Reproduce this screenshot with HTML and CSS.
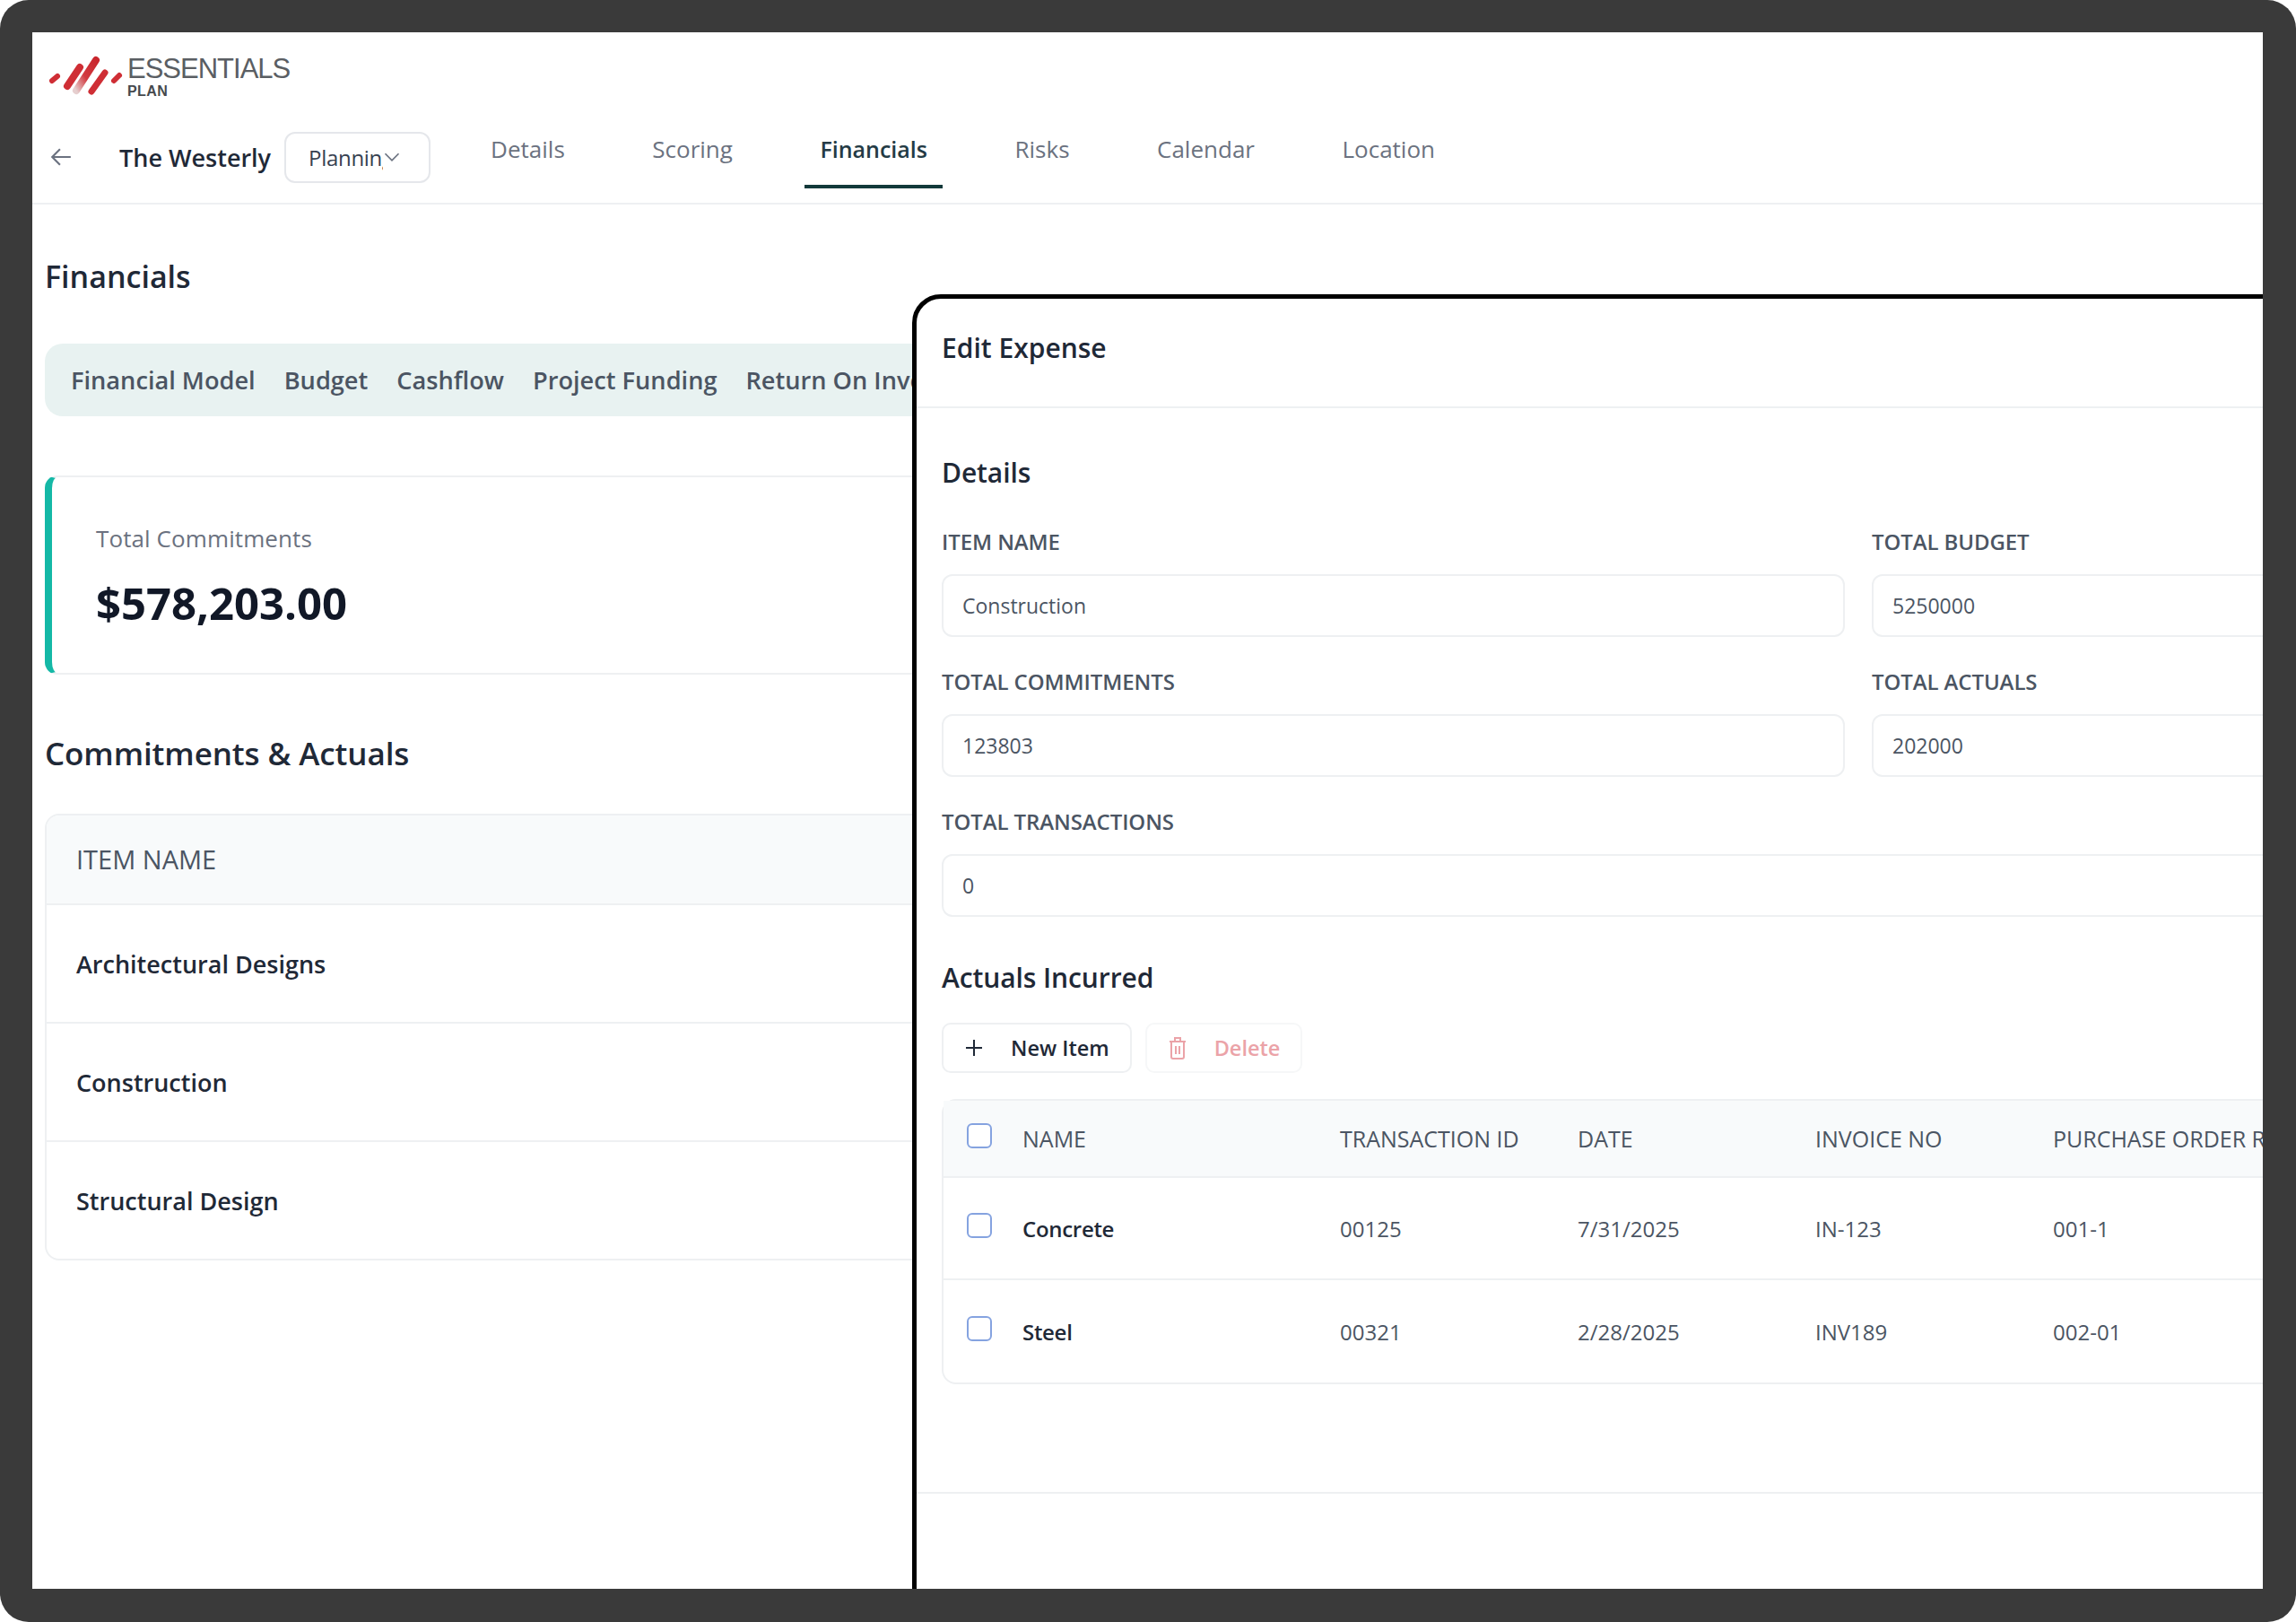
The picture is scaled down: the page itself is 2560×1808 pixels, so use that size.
FILE: index.html
```html
<!DOCTYPE html>
<html lang="en">
<head>
    <meta charset="UTF-8">
    <title>Financials</title>
    <link rel="stylesheet" href="styles.css">
</head>
<body>
    <div class="frame">
        <div class="screen">
            <header class="topbar">
                <div class="brand">
                    <svg class="brand-mark" viewBox="0 0 84 50" width="84" height="50">
                        <defs>
                            <linearGradient id="markfade" x1="0" y1="1" x2="1" y2="0">
                                <stop offset="0" stop-color="#e6cfcf"/>
                                <stop offset="0.45" stop-color="#d23a40"/>
                                <stop offset="1" stop-color="#c9262d"/>
                            </linearGradient>
                        </defs>
                        <g fill="none" stroke="#cf2e35" stroke-linecap="round">
                            <path d="M3 30 L9 25" stroke-width="6"/>
                            <path d="M20 36 L34 15" stroke-width="8"/>
                            <path d="M30 41 L52 7" stroke="url(#markfade)" stroke-width="8"/>
                            <path d="M47 42 L62 21" stroke-width="7"/>
                            <path d="M72 30 L78 24" stroke-width="6"/>
                        </g>
                    </svg>
                    <div class="brand-text">
                        <span class="brand-name">ESSENTIALS</span>
                        <span class="brand-sub">PLAN</span>
                    </div>
                </div>
                <div class="nav-row">
                    <svg class="back-icon" viewBox="0 0 24 24" width="26" height="26">
                        <path d="M22 12H3M11 4l-8 8 8 8" fill="none" stroke="#6b7280" stroke-width="2"/>
                    </svg>
                    <span class="project-name">The Westerly</span>
                    <div class="status-select">
                        <span class="status-value">Planning</span>
                        <svg viewBox="0 0 16 16" width="20" height="20">
                            <path d="M2 5l6 6 6-6" fill="none" stroke="#6b7280" stroke-width="1.4"/>
                        </svg>
                    </div>
                    <nav class="tabs">
                        <a class="tab">Details</a>
                        <a class="tab">Scoring</a>
                        <a class="tab active">Financials</a>
                        <a class="tab">Risks</a>
                        <a class="tab">Calendar</a>
                        <a class="tab">Location</a>
                    </nav>
                </div>
            </header>

            <main class="content">
                <h1 class="page-title">Financials</h1>
                <div class="subtabs">
                    <span>Financial Model</span>
                    <span>Budget</span>
                    <span>Cashflow</span>
                    <span>Project Funding</span>
                    <span>Return On Investment</span>
                </div>
                <section class="stat-card">
                    <div class="stat-label">Total Commitments</div>
                    <div class="stat-value">$578,203.00</div>
                </section>
                <h2 class="section-title">Commitments &amp; Actuals</h2>
                <div class="items-table">
                    <div class="items-head">ITEM NAME</div>
                    <div class="items-row">Architectural Designs</div>
                    <div class="items-row">Construction</div>
                    <div class="items-row">Structural Design</div>
                </div>
            </main>

            <aside class="drawer">
                <div class="drawer-head">Edit Expense</div>
                <div class="drawer-body">
                    <h3 class="drawer-title">Details</h3>
                    <div class="form-grid">
                        <div class="field">
                            <label>ITEM NAME</label>
                            <div class="input">Construction</div>
                        </div>
                        <div class="field">
                            <label>TOTAL BUDGET</label>
                            <div class="input">5250000</div>
                        </div>
                        <div class="field">
                            <label>TOTAL COMMITMENTS</label>
                            <div class="input">123803</div>
                        </div>
                        <div class="field">
                            <label>TOTAL ACTUALS</label>
                            <div class="input">202000</div>
                        </div>
                        <div class="field wide">
                            <label>TOTAL TRANSACTIONS</label>
                            <div class="input">0</div>
                        </div>
                    </div>
                    <h3 class="drawer-title actuals-title">Actuals Incurred</h3>
                    <div class="actions">
                        <button class="action-btn" type="button">
                            <svg viewBox="0 0 24 24" width="24" height="24">
                                <path d="M12 3v18M3 12h18" fill="none" stroke="#1f2937" stroke-width="2"/>
                            </svg>
                            New Item
                        </button>
                        <button class="action-btn danger" type="button">
                            <svg viewBox="0 0 24 28" width="24" height="28">
                                <path d="M3 7h18M9 7V3h6v4M5 7v17a2 2 0 0 0 2 2h10a2 2 0 0 0 2-2V7M10 12v9M14 12v9" fill="none" stroke="#eba3a8" stroke-width="2"/>
                            </svg>
                            Delete
                        </button>
                    </div>
                    <table class="actuals-table">
                        <thead>
                            <tr>
                                <th class="col-check"><span class="checkbox"></span></th>
                                <th class="col-name">NAME</th>
                                <th class="col-id">TRANSACTION ID</th>
                                <th class="col-date">DATE</th>
                                <th class="col-invoice">INVOICE NO</th>
                                <th>PURCHASE ORDER REF</th>
                            </tr>
                        </thead>
                        <tbody>
                            <tr>
                                <td><span class="checkbox"></span></td>
                                <td class="cell-name">Concrete</td>
                                <td>00125</td>
                                <td>7/31/2025</td>
                                <td>IN-123</td>
                                <td>001-1</td>
                            </tr>
                            <tr>
                                <td><span class="checkbox"></span></td>
                                <td class="cell-name">Steel</td>
                                <td>00321</td>
                                <td>2/28/2025</td>
                                <td>INV189</td>
                                <td>002-01</td>
                            </tr>
                        </tbody>
                    </table>
                </div>
                <div class="drawer-foot"></div>
            </aside>
        </div>
    </div>
</body>
</html>
```

FILE: styles.css
```css
* {
    margin: 0;
    padding: 0;
    box-sizing: border-box;
    font-family: "Open Sans", "Noto Sans", sans-serif;
}
html, body {
    height: 100%;
    background: #fff;
}
.frame {
    width: 2560px;
    height: 1808px;
    padding: 36px 37px 37px 36px;
    background: #3a3a3a;
    border-radius: 32px;
}
.screen {
    position: relative;
    height: 100%;
    background: #fff;
    overflow: hidden;
}

/* top bar */
.topbar {
    height: 192px;
    padding: 24px 0 0 19px;
    border-bottom: 2px solid #eef0f2;
}
.brand {
    display: flex;
    align-items: flex-start;
    gap: 3px;
    height: 56px;
}
.brand-text {
    display: flex;
    flex-direction: column;
    color: #5a5e63;
}
.brand-name {
    font-family: "Liberation Sans", sans-serif;
    font-size: 31px;
    line-height: 34px;
    letter-spacing: -1px;
}
.brand-sub {
    font-family: "Liberation Sans", sans-serif;
    font-size: 16px;
    line-height: 16px;
    font-weight: 700;
    letter-spacing: 0.4px;
    color: #46494d;
}
.nav-row {
    display: flex;
    align-items: center;
    height: 90px;
    margin-top: 14px;
}
.back-icon {
    flex: none;
}
.project-name {
    margin-left: 52px;
    font-size: 27px;
    font-weight: 600;
    color: #1f2937;
}
.status-select {
    display: flex;
    align-items: center;
    width: 163px;
    height: 57px;
    margin-left: 15px;
    padding-left: 25px;
    border: 2px solid #e5e7eb;
    border-radius: 12px;
}
.status-value {
    width: 83px;
    overflow: hidden;
    white-space: nowrap;
    font-size: 24px;
    letter-spacing: -0.3px;
    color: #374151;
}
.tabs {
    display: flex;
    gap: 63.5px;
    align-self: flex-start;
    margin-left: 50px;
}
.tab {
    height: 80px;
    padding: 16px 17px 0;
    font-size: 26px;
    font-weight: 500;
    line-height: 40px;
    color: #6b7280;
    border-bottom: 4px solid transparent;
}
.tab.active {
    font-size: 25px;
    font-weight: 600;
    color: #243b45;
    border-bottom-color: #12393a;
}

/* page content */
.content {
    padding: 0 0 0 14px;
}
.page-title {
    margin-top: 57px;
    font-size: 34px;
    line-height: 46px;
    font-weight: 600;
    color: #1f2937;
}
.subtabs {
    display: flex;
    gap: 32px;
    align-items: center;
    height: 81px;
    margin-top: 52px;
    padding-left: 29px;
    background: #e8f2f1;
    border-radius: 20px;
    white-space: nowrap;
    font-size: 27.2px;
    font-weight: 600;
    color: #4b5563;
}
.stat-card {
    height: 222px;
    margin-top: 66px;
    padding: 50px 0 0 49px;
    border: 2px solid #eef0f2;
    border-left: 8px solid #14b8a6;
    border-radius: 14px;
}
.stat-label {
    font-size: 26px;
    line-height: 36px;
    font-weight: 500;
    letter-spacing: 0.1px;
    color: #6b7280;
}
.stat-value {
    margin-top: 20px;
    font-size: 49px;
    line-height: 68px;
    font-weight: 700;
    color: #111827;
}
.section-title {
    margin-top: 64px;
    font-size: 35px;
    line-height: 48px;
    font-weight: 600;
    letter-spacing: -0.1px;
    color: #1f2937;
}
.items-table {
    margin-top: 43px;
    border: 2px solid #eef0f2;
    border-radius: 16px;
    overflow: hidden;
}
.items-head {
    height: 98px;
    padding-left: 33px;
    line-height: 98px;
    background: #f8fafb;
    font-size: 29px;
    font-weight: 500;
    color: #4b5563;
}
.items-row {
    height: 132px;
    padding-left: 33px;
    line-height: 132px;
    border-top: 2px solid #eef0f2;
    font-size: 27px;
    font-weight: 600;
    color: #1f2937;
}

/* edit drawer */
.drawer {
    position: absolute;
    top: 292px;
    left: 981px;
    width: 1700px;
    height: 1500px;
    background: #fff;
    border: 5px solid #000;
    border-radius: 32px 0 0 0;
}
.drawer-head {
    height: 122px;
    padding: 33px 0 0 28px;
    border-bottom: 2px solid #eef0f2;
    font-size: 30px;
    line-height: 44px;
    font-weight: 600;
    color: #1f2937;
}
.drawer-body {
    padding: 50px 0 0 28px;
}
.drawer-title {
    font-size: 30px;
    line-height: 44px;
    font-weight: 600;
    letter-spacing: -0.1px;
    color: #1f2937;
}
.form-grid {
    display: grid;
    grid-template-columns: 1007px 1fr;
    column-gap: 30px;
    row-gap: 33px;
    margin-top: 38px;
}
.field label {
    display: block;
    height: 34px;
    font-size: 24px;
    line-height: 34px;
    font-weight: 600;
    letter-spacing: -0.1px;
    color: #4b5563;
}
.field.wide {
    grid-column: 1 / 3;
}
.input {
    height: 70px;
    margin-top: 19px;
    padding-left: 21px;
    line-height: 66px;
    border: 2px solid #eef0f2;
    border-radius: 12px;
    font-size: 23px;
    color: #4b5563;
}
.actuals-title {
    margin-top: 46px;
}
.actions {
    display: flex;
    gap: 15px;
    margin-top: 28px;
}
.action-btn {
    display: flex;
    align-items: center;
    gap: 29px;
    height: 56px;
    padding: 0 23px 0 22px;
    background: #fff;
    border: 2px solid #eef0f2;
    border-radius: 10px;
    font-size: 23.5px;
    font-weight: 600;
    color: #1f2937;
}
.action-btn.danger {
    color: #eba3a8;
    border-color: #f6f7f8;
}
.actuals-table {
    width: 1640px;
    margin-top: 29px;
    border-collapse: separate;
    border-spacing: 0;
    table-layout: fixed;
    border: 2px solid #eef0f2;
    border-radius: 16px;
    font-size: 24px;
    color: #4b5563;
    text-align: left;
}
.actuals-table th {
    height: 86px;
    background: #f8fafb;
    border-bottom: 2px solid #eef0f2;
    font-size: 25px;
    font-weight: 500;
    text-align: left;
    white-space: nowrap;
}
.actuals-table td {
    height: 114px;
    border-bottom: 2px solid #eef0f2;
}
.actuals-table tr:last-child td {
    border-bottom: none;
}
.col-check {
    width: 88px;
    padding-left: 26px;
}
.actuals-table td:first-child {
    padding-left: 26px;
}
.actuals-table .checkbox {
    margin-top: -6px;
}
.col-name {
    width: 354px;
}
.col-id, .col-date, .col-invoice {
    width: 265px;
}
.cell-name {
    font-weight: 600;
    letter-spacing: -0.3px;
    color: #1f2937;
}
.checkbox {
    display: block;
    width: 28px;
    height: 28px;
    background: #fff;
    border: 2px solid #85a3e0;
    border-radius: 6px;
}
.drawer-foot {
    margin-top: 120px;
    border-top: 2px solid #eef0f2;
}
```
